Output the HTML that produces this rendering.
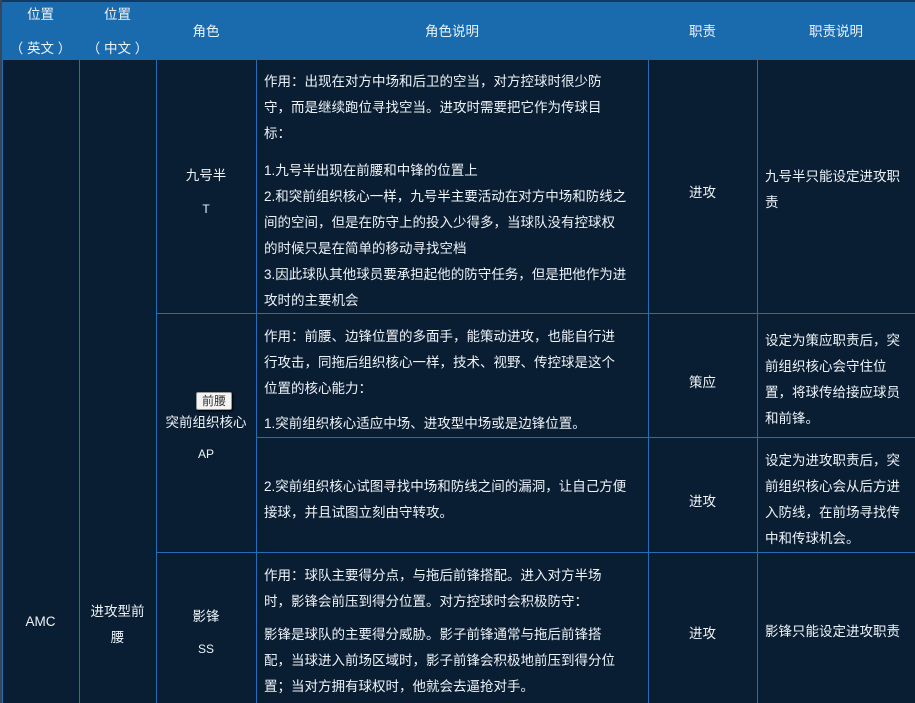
<!DOCTYPE html>
<html><head><meta charset="utf-8"><style>
*{margin:0;padding:0;box-sizing:border-box}
body{width:915px;height:703px;background:#0a1e33;position:relative;overflow:hidden;font-family:"Liberation Sans","Noto Sans CJK SC",sans-serif;font-size:13.5px;color:#eef3f8}
.a{position:absolute;white-space:nowrap}
.h{position:absolute;left:0;top:0;width:915px;height:60px;background:#1a6aae;border-top:2px solid #0e3a68}
.v{position:absolute;width:1px;background:#1e6fb5}
.hl{position:absolute;height:1px;background:#1e6fb5}
.c{position:absolute;text-align:center;white-space:nowrap}
.p{position:absolute;line-height:26px;white-space:nowrap}
</style></head><body>
<div class="h"></div>
<div class="a" style="left:0;top:0;width:2px;height:703px;background:#3a4654"></div>
<div class="c" style="left:2px;width:77px;top:3px">位置</div>
<div class="c" style="left:2px;width:77px;top:37px">（ 英文 ）</div>
<div class="c" style="left:79px;width:77px;top:3px">位置</div>
<div class="c" style="left:79px;width:77px;top:37px">（ 中文 ）</div>
<div class="c" style="left:156px;width:100px;top:20px">角色</div>
<div class="c" style="left:256px;width:392px;top:20px">角色说明</div>
<div class="c" style="left:648px;width:109px;top:20px">职责</div>
<div class="c" style="left:757px;width:158px;top:20px">职责说明</div>

<div class="v" style="left:2px;top:60px;height:643px"></div>
<div class="v" style="left:79px;top:60px;height:643px"></div>
<div class="v" style="left:156px;top:60px;height:643px"></div>
<div class="v" style="left:256px;top:60px;height:643px"></div>
<div class="v" style="left:648px;top:60px;height:643px"></div>
<div class="v" style="left:757px;top:60px;height:643px"></div>
<div class="hl" style="left:156px;top:313px;width:759px"></div>
<div class="hl" style="left:256px;top:437px;width:659px"></div>
<div class="hl" style="left:156px;top:552px;width:759px"></div>

<div class="c" style="left:2px;width:77px;top:614px">AMC</div>
<div class="c" style="left:79px;width:77px;top:599px;line-height:26px">进攻型前<br>腰</div>

<div class="c" style="left:156px;width:100px;top:164px">九号半</div>
<div class="c" style="left:156px;width:100px;top:202px;font-size:12px">T</div>
<div class="p" style="left:264px;top:69px">作用：出现在对方中场和后卫的空当，对方控球时很少防<br>守，而是继续跑位寻找空当。进攻时需要把它作为传球目<br>标：</div>
<div class="p" style="left:264px;top:158px">1.九号半出现在前腰和中锋的位置上<br>2.和突前组织核心一样，九号半主要活动在对方中场和防线之<br>间的空间，但是在防守上的投入少得多，当球队没有控球权<br>的时候只是在简单的移动寻找空档<br>3.因此球队其他球员要承担起他的防守任务，但是把他作为进<br>攻时的主要机会</div>
<div class="c" style="left:648px;width:109px;top:181px">进攻</div>
<div class="p" style="left:765px;top:164px">九号半只能设定进攻职<br>责</div>

<div class="c" style="left:156px;width:100px;top:411px">突前组织核心</div>
<div class="a" style="left:196px;top:392px;width:36px;height:18px;background:#f4f4f4;border:1px solid #999;border-radius:2px;color:#333;font-size:12px;text-align:center;line-height:16px;box-shadow:1px 1px 2px #000">前腰</div>
<div class="c" style="left:156px;width:100px;top:447px;font-size:12px">AP</div>
<div class="p" style="left:264px;top:324px">作用：前腰、边锋位置的多面手，能策动进攻，也能自行进<br>行攻击，同拖后组织核心一样，技术、视野、传控球是这个<br>位置的核心能力：</div>
<div class="p" style="left:264px;top:411px">1.突前组织核心适应中场、进攻型中场或是边锋位置。</div>
<div class="c" style="left:648px;width:109px;top:371px">策应</div>
<div class="p" style="left:765px;top:328px">设定为策应职责后，突<br>前组织核心会守住位<br>置，将球传给接应球员<br>和前锋。</div>
<div class="p" style="left:264px;top:474px">2.突前组织核心试图寻找中场和防线之间的漏洞，让自己方便<br>接球，并且试图立刻由守转攻。</div>
<div class="c" style="left:648px;width:109px;top:490px">进攻</div>
<div class="p" style="left:765px;top:448px">设定为进攻职责后，突<br>前组织核心会从后方进<br>入防线，在前场寻找传<br>中和传球机会。</div>

<div class="c" style="left:156px;width:100px;top:605px">影锋</div>
<div class="c" style="left:156px;width:100px;top:642px;font-size:12px">SS</div>
<div class="p" style="left:264px;top:563px">作用：球队主要得分点，与拖后前锋搭配。进入对方半场<br>时，影锋会前压到得分位置。对方控球时会积极防守：</div>
<div class="p" style="left:264px;top:622px">影锋是球队的主要得分威胁。影子前锋通常与拖后前锋搭<br>配，当球进入前场区域时，影子前锋会积极地前压到得分位<br>置；当对方拥有球权时，他就会去逼抢对手。</div>
<div class="c" style="left:648px;width:109px;top:622px">进攻</div>
<div class="p" style="left:765px;top:619px">影锋只能设定进攻职责</div>
</body></html>
